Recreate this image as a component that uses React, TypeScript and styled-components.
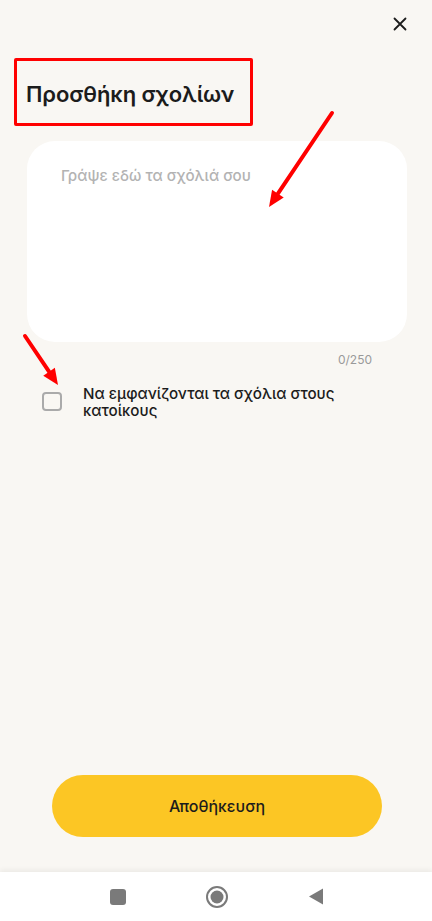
import React from "react";
import styled, { createGlobalStyle } from "styled-components";

const Global = createGlobalStyle`
  html, body { margin: 0; padding: 0; background: #F9F7F3; }
  body { font-family: Inter, "Noto Sans", sans-serif; color: #1c1c1c; }
  * { box-sizing: border-box; }
`;

const Screen = styled.div`
  position: relative;
  width: 432px;
  height: 921px;
  display: flex;
  flex-direction: column;
  background: #F9F7F3;
  overflow: hidden;
`;

const Content = styled.div`
  flex: 1;
  display: flex;
  flex-direction: column;
`;

const TopBar = styled.div`
  height: 48px;
  display: flex;
  justify-content: flex-end;
  align-items: center;
  padding-right: 25px;
`;

const CloseButton = styled.button`
  border: none;
  background: transparent;
  padding: 0;
  width: 14px;
  height: 14px;
  display: flex;
  align-items: center;
  justify-content: center;
  color: #1c1c1c;
`;

const TitleBox = styled.div`
  margin: 10px 0 0 14px;
  width: 239px;
  height: 68px;
  border: 3px solid #ff0000;
  border-radius: 2px;
  display: flex;
  align-items: center;
  padding: 4px 0 0 9px;
`;

const Title = styled.h1`
  margin: 0;
  font-size: 22px;
  font-weight: 600;
  letter-spacing: -0.1px;
  color: #1c1c1c;
`;

const TextAreaBox = styled.div`
  margin: 15px 25px 0 27px;
  height: 201px;
  background: #ffffff;
  border-radius: 28px;
  padding: 25px 34px;
`;

const Placeholder = styled.div`
  font-size: 15.2px;
  color: #b3b3b3;
  font-weight: 500;
`;

const Counter = styled.div`
  align-self: flex-end;
  margin: 10px 60px 0 0;
  font-size: 12px;
  color: #9a9a9a;
`;

const CheckRow = styled.label`
  display: flex;
  align-items: flex-start;
  gap: 21px;
  margin: 16px 40px 0 42px;
`;

const CheckBox = styled.span`
  flex: none;
  width: 20px;
  height: 19px;
  margin-top: 9px;
  border: 2px solid #aaaaaa;
  border-radius: 4px;
`;

const CheckLabel = styled.span`
  font-size: 15.2px;
  font-weight: 500;
  line-height: 17px;
  color: #1c1c1c;
  padding-top: 2px;
`;

const Footer = styled.div`
  padding: 0 50px 35px 52px;
`;

const SaveButton = styled.button`
  width: 330px;
  height: 62px;
  border: none;
  border-radius: 31px;
  background: #fcc624;
  font-family: Inter, "Noto Sans", sans-serif;
  font-size: 16px;
  font-weight: 500;
  color: #1c1c1c;
`;

const NavBar = styled.div`
  height: 49px;
  background: #ffffff;
  box-shadow: 0 -2px 5px rgba(0, 0, 0, 0.06);
  display: flex;
  align-items: center;
  justify-content: center;
  gap: 79px;
  padding-left: 2px;
`;

const NavSquare = styled.span`
  width: 16px;
  height: 16px;
  border-radius: 3px;
  background: #7a7a7a;
`;

const Overlay = styled.svg`
  position: absolute;
  left: 0;
  top: 0;
  pointer-events: none;
`;

function Arrow({ x1, y1, x2, y2 }: { x1: number; y1: number; x2: number; y2: number }) {
  const dx = x2 - x1;
  const dy = y2 - y1;
  const len = Math.hypot(dx, dy);
  const ux = dx / len;
  const uy = dy / len;
  const head = 16;
  const hw = 7;
  const bx = x2 - ux * head;
  const by = y2 - uy * head;
  const px = -uy;
  const py = ux;
  return (
    <g>
      <line x1={x1} y1={y1} x2={bx} y2={by} stroke="#ff0000" strokeWidth={4} strokeLinecap="round" />
      <polygon
        points={`${x2},${y2} ${bx + px * hw},${by + py * hw} ${bx - px * hw},${by - py * hw}`}
        fill="#ff0000"
      />
    </g>
  );
}

export default function App() {
  return (
    <>
      <Global />
      <Screen>
        <Content>
          <TopBar>
            <CloseButton aria-label="close">
              <svg width="14" height="14" viewBox="0 0 14 14">
                <path d="M1.5 1.5 L12.5 12.5 M12.5 1.5 L1.5 12.5" stroke="#1c1c1c" strokeWidth="1.8" strokeLinecap="round" />
              </svg>
            </CloseButton>
          </TopBar>
          <TitleBox>
            <Title>Προσθήκη σχολίων</Title>
          </TitleBox>
          <TextAreaBox>
            <Placeholder>Γράψε εδώ τα σχόλιά σου</Placeholder>
          </TextAreaBox>
          <Counter>0/250</Counter>
          <CheckRow>
            <CheckBox />
            <CheckLabel>Να εμφανίζονται τα σχόλια στους κατοίκους</CheckLabel>
          </CheckRow>
        </Content>
        <Footer>
          <SaveButton>Αποθήκευση</SaveButton>
        </Footer>
        <NavBar>
          <NavSquare />
          <svg width="24" height="24" viewBox="0 0 24 24">
            <circle cx="12" cy="12" r="10" fill="none" stroke="#7a7a7a" strokeWidth="2" />
            <circle cx="12" cy="12" r="6.5" fill="#7a7a7a" />
          </svg>
          <svg width="16" height="17" viewBox="0 0 16 17">
            <polygon points="15,0.5 15,16.5 1,8.5" fill="#7a7a7a" />
          </svg>
        </NavBar>
        <Overlay width="432" height="921" viewBox="0 0 432 921">
          <Arrow x1={332} y1={113} x2={269} y2={207} />
          <Arrow x1={25} y1={336} x2={58} y2={385} />
        </Overlay>
      </Screen>
    </>
  );
}
